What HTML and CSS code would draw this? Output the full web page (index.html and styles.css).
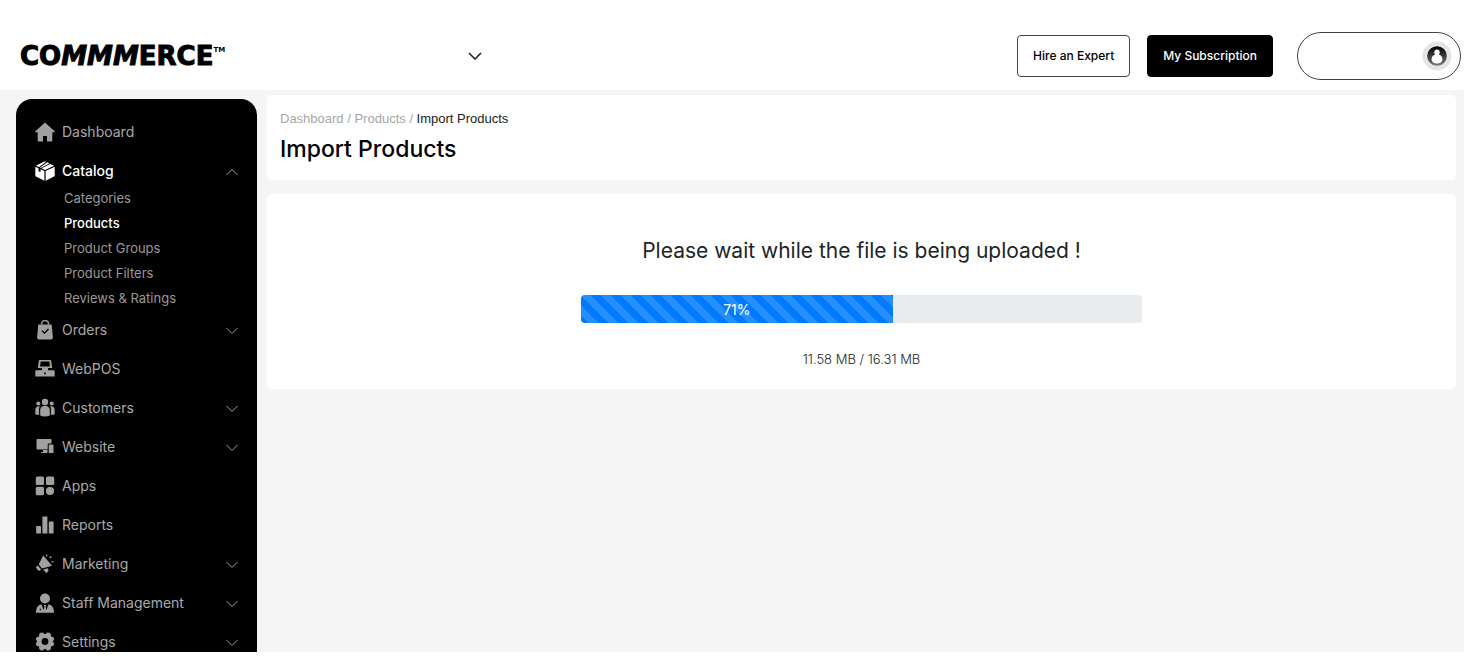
FILE: index.html
```html
<!DOCTYPE html>
<html lang="en">
<head>
<meta charset="utf-8">
<title>Import Products</title>
<link rel="stylesheet" href="styles.css">
</head>
<body>
<svg class="sprite" aria-hidden="true">
  <symbol id="chevron" viewBox="0 0 14 8"><path d="M1.500 1L7 6.500 12.500 1" fill="none" stroke="currentColor"/></symbol>
</svg>
<header class="topbar">
  <a class="logo" href="#">CO<i>MMM</i>ERCE<sup class="tm">TM</sup></a>
  <button class="store-switch" aria-label="Switch store"><svg width="14" height="8" viewBox="0 0 14 8"><path d="M1 1l6 6 6-6" fill="none" stroke="currentColor" stroke-width="1.600"/></svg></button>
  <div class="actions">
    <a class="btn" href="#">Hire an Expert</a>
    <a class="btn btn-dark" href="#">My Subscription</a>
    <button class="account" aria-label="Account">
      <svg width="30" height="30" viewBox="0 0 30 30"><defs><linearGradient id="disc" x2="0" y2="1"><stop offset="0" stop-color="#000"/><stop offset="1" stop-color="#777"/></linearGradient></defs><circle cx="15" cy="15" r="14.500" fill="#e4e4e4"/><circle cx="15" cy="15" r="9.800" fill="url(#disc)"/><path d="M15 8.400c1.700 0 2.800 1.200 2.800 2.800 0 1-.3 1.800-.9 2.400 2.200.7 3.500 2.300 3.500 4.900 0 2.400-2.400 4-5.400 4s-5.400-1.600-5.400-4c0-2.600 1.300-4.200 3.500-4.900-.6-.6-.9-1.400-.9-2.400 0-1.600 1.100-2.800 2.800-2.800z" fill="#fff"/></svg>
    </button>
  </div>
</header>
<div class="shell">
  <nav class="sidebar" aria-label="Main">
    <a class="item" href="#"><svg class="icon" viewBox="0 0 20 20"><path d="M10 .5L.4 9.300c-.4.400-.2 1 .4 1H2.700V18.500c0 .6.400 1 1 1H8v-5.500h4v5.500h4.300c.6 0 1-.4 1-1v-8.200h1.900c.6 0 .8-.6.400-1z"/></svg>Dashboard</a>
    <a class="item active" href="#"><svg class="icon" viewBox="0 0 20 20"><path d="M.3 5.700l3.200 1.500v3l2 .9V8.200l3.900 1.900V19.700L1 15.500c-.5-.3-.7-.6-.7-1.100z"/><path d="M10.600 10.100l9.100-4.400v8.700c0 .5-.2.800-.7 1.100l-8.400 4.200z"/><path d="M10 9L6.500 7.300 15.200 3.100l4 1.700zM.9 4.700l3.500-1.800L8.900.7c.7-.4 1.500-.4 2.200 0l-6.900 5.300zM5 6.600l7.300-5.400 2.200 1L5.700 6.900z"/></svg>Catalog<svg class="chev up" viewBox="0 0 14 8"><use href="#chevron"/></svg></a>
    <div class="submenu">
      <a href="#">Categories</a>
      <a class="active" href="#">Products</a>
      <a href="#">Product Groups</a>
      <a href="#">Product Filters</a>
      <a href="#">Reviews &amp; Ratings</a>
    </div>
    <a class="item" href="#"><svg class="icon" viewBox="0 0 20 20"><path fill-rule="evenodd" d="M3.300 4.500h13.400l1.200 12.800c.1 1.300-.8 2.200-2 2.200H4.100c-1.200 0-2.100-.9-2-2.200zM6.500 11l3 3.200L14 9.500l-1-.9-3.500 3.600-2-2z"/><path d="M6.500 4.500V3.800a3.500 3.200 0 0 1 7 0v.7" fill="none" stroke="currentColor" stroke-width="1.400"/></svg>Orders<svg class="chev" viewBox="0 0 14 8"><use href="#chevron"/></svg></a>
    <a class="item" href="#"><svg class="icon" viewBox="0 0 20 20"><path fill-rule="evenodd" d="M4.700 1h10.600c.5 0 .8.300.9.800l1 7.200H2.800l1-7.200c.1-.5.400-.8.900-.8zm1 1.600L5 7.400h10l-.7-4.800z"/><path d="M7 8.500h6V12H7z"/><path fill-rule="evenodd" d="M1.300 11.200h17.400c.6 0 1 .4 1 1v5.300H.3v-5.300c0-.6.400-1 1-1zm7.900 2.300v1.700h1.600v-1.700z"/></svg>WebPOS</a>
    <a class="item" href="#"><svg class="icon" viewBox="0 0 20 20"><circle cx="10" cy="4" r="3.200"/><circle cx="3.300" cy="5.500" r="2"/><circle cx="16.700" cy="5.500" r="2"/><path d="M5.200 17.500V12a4.800 4.200 0 0 1 9.600 0v5.500c-3 1.200-6.600 1.200-9.600 0zM4.200 16.800H1c-.4 0-.7-.3-.7-.7v-4.500c0-2 1.700-3.500 4.500-3.200-.5.800-.8 1.800-.8 3zM15.800 16.800H19c.4 0 .7-.3.700-.7v-4.500c0-2-1.700-3.500-4.500-3.200.5.800.8 1.800.8 3z"/></svg>Customers<svg class="chev" viewBox="0 0 14 8"><use href="#chevron"/></svg></a>
    <a class="item" href="#"><svg class="icon" viewBox="0 0 20 20"><path d="M2.500 2h13c.6 0 1 .4 1 1v3.500h-2.300c-.9 0-1.500.6-1.500 1.500v4.500H2.500c-.6 0-1-.4-1-1V3c0-.6.400-1 1-1zM8 13h4.500v3H6v-1h2z"/><path d="M14.700 7.500h2.800c.6 0 1 .4 1 1V15c0 .6-.4 1-1 1h-2.800c-.6 0-1-.4-1-1V8.500c0-.6.400-1 1-1z"/></svg>Website<svg class="chev" viewBox="0 0 14 8"><use href="#chevron"/></svg></a>
    <a class="item" href="#"><svg class="icon" viewBox="0 0 20 20"><rect x=".8" y=".5" width="8.200" height="8.400" rx="1.500"/><rect x="11" y=".5" width="8.200" height="8.400" rx="1.500"/><rect x=".8" y="10.800" width="8.200" height="8.400" rx="1.500"/><circle cx="15" cy="15" r="4.100"/></svg>Apps</a>
    <a class="item" href="#"><svg class="icon" viewBox="0 0 20 20"><rect x="1.200" y="11" width="4.800" height="7.500" rx=".5"/><rect x="7.400" y="1.500" width="5" height="17" rx=".5"/><rect x="13.800" y="6.500" width="4.800" height="12" rx=".5"/></svg>Reports</a>
    <a class="item" href="#"><svg class="icon" viewBox="0 0 20 20"><path d="M8.200 1.500L17 11.700 7 14.500 3.700 10.500zM2.800 11.400l3.300 4-1.200 1.100c-.6.500-1.200.5-1.700-.1L1 13.700l.1-.8zM8 15.600l4.800-1.300.6 1.800c.2.900-.2 1.600-1 2l-1 1.200-1.500-1.800z"/><path d="M10.800.8l1.300-.4.500 1.600-1.300.4zM14.300 3.600L15.900 2l1 1-1.700 1.500zM16.600 7.200l1.900-.2.100 1.300-1.900.2z"/></svg>Marketing<svg class="chev" viewBox="0 0 14 8"><use href="#chevron"/></svg></a>
    <a class="item" href="#"><svg class="icon" viewBox="0 0 20 20"><circle cx="10" cy="5.500" r="5"/><path fill-rule="evenodd" d="M1 19.700c0-5 1.700-7.700 5.500-8.500l2.200 6 .7-3.800-.7-1.400h2.600l-.7 1.400.7 3.800 2.200-6c3.800.8 5.500 3.500 5.500 8.500zm3.700-4v1.500H6v-1.500z"/></svg>Staff Management<svg class="chev" viewBox="0 0 14 8"><use href="#chevron"/></svg></a>
    <a class="item" href="#"><svg class="icon" viewBox="0 0 20 20"><path fill-rule="evenodd" d="M5.600.8l2.300-.3L9.300 2h1.400L12.100.5l2.300.3 1.400 1.300.2 2.500 2.400.6.900 2-1.500 2.300 1.500 2.300-.9 2-2.400.6-.2 2.500-1.400 1.300-2.300.3-1.400-1.500H9.300l-1.400 1.500-2.300-.3-1.400-1.300-.2-2.500-2.400-.6-.9-2 1.500-2.300L.7 7.200l.9-2L4 4.600l.2-2.500zM10 6.100a3.400 3.400 0 1 0 0 6.800 3.400 3.400 0 0 0 0-6.800z"/></svg>Settings<svg class="chev" viewBox="0 0 14 8"><use href="#chevron"/></svg></a>
  </nav>
  <main class="content">
    <section class="card page-head">
      <nav class="crumbs" aria-label="Breadcrumb"><a href="#">Dashboard</a> / <a href="#">Products</a> / <span class="current">Import Products</span></nav>
      <h1>Import Products</h1>
    </section>
    <section class="card upload">
      <h2>Please wait while the file is being uploaded !</h2>
      <div class="progress" role="progressbar" aria-label="Upload progress" aria-valuenow="71" aria-valuemin="0" aria-valuemax="100">
        <div class="bar" style="width:55.600%">71%</div>
      </div>
      <p class="size">11.58 MB / 16.31 MB</p>
    </section>
  </main>
</div>
</body>
</html>
```
FILE: styles.css
```css
* { box-sizing: border-box; }
body {
  margin: 0;
  padding: 0 9px 8px 0;
  height: 100vh;
  overflow: hidden;
  display: flex;
  flex-direction: column;
  background: #fff;
  color: #212529;
  font-family: Inter, "Liberation Sans", sans-serif;
  font-size: 14px;
}
a { color: inherit; text-decoration: none; }
button { font: inherit; cursor: pointer; }
.sprite { display: none; }

.topbar {
  flex: none;
  display: flex;
  align-items: center;
  height: 90px;
  padding: 22px 3px 0 20px;
}
.logo {
  width: 448px;
  color: #000;
  font: 700 26px/24px "DejaVu Sans", sans-serif;
  -webkit-text-stroke: 1px #000;
}
.tm { font-size: 7px; line-height: 8px; vertical-align: 13px; -webkit-text-stroke: 0; }
.store-switch { display: flex; padding: 0; border: 0; background: none; color: #222; }
.actions { display: flex; align-items: center; margin-left: auto; }
.btn {
  padding: 0 15px;
  border: 1px solid #444;
  border-radius: 4px;
  line-height: 40px;
  font-size: 12px;
  font-weight: 500;
  color: #000;
  background: #fff;
}
.btn-dark { margin: 0 24px 0 17px; background: #000; border-color: #000; color: #fff; }
.account {
  display: flex;
  align-items: center;
  justify-content: flex-end;
  width: 164px;
  height: 48px;
  padding: 0 8px;
  border: 1px solid #444;
  border-radius: 24px;
  background: #fff;
}

.shell {
  flex: 1;
  min-height: 0;
  display: flex;
  gap: 10px;
  padding: 0 8px 0 16px;
  background: #f5f5f5;
  overflow: hidden;
}
.sidebar {
  flex: none;
  width: 241px;
  margin-top: 9px;
  padding: 13px 18px 13px 19px;
  border-radius: 16px 16px 0 0;
  background: #000;
  color: #a9a9a9;
  overflow: hidden;
}
.item { display: flex; align-items: center; gap: 7px; height: 39px; }
.item.active, .submenu .active { color: #fff; font-weight: 500; }
.icon { width: 20px; height: 20px; fill: #a0a0a0; color: #a0a0a0; }
.active .icon { fill: #fff; }
.chev { width: 14px; height: 8px; margin: 3px 0 0 auto; color: #a0a0a0; }
.up { transform: rotate(180deg); }
.submenu { margin: -4px 0 -1px; padding-left: 29px; font-size: 13px; color: #999; }
.submenu a { display: block; line-height: 25px; }

.content { flex: 1; min-width: 0; padding-top: 5px; }
.card { border-radius: 5px; background: #fff; }
.page-head { padding: 14px 13px; }
.crumbs { font: 13px/20px "Liberation Sans", sans-serif; color: #a6a6a6; }
.current { color: #222; }
h1, h2, p { margin: 0; font-weight: 400; }
h1 { margin-top: 4px; font-size: 23px; line-height: 33px; font-weight: 500; color: #000; }
.upload {
  display: flex;
  flex-direction: column;
  align-items: center;
  margin-top: 14px;
  padding: 40px 33px 18px;
}
h2 { font-size: 21px; line-height: 34px; }
.progress {
  width: 50%;
  height: 28px;
  margin: 27px 0 24px;
  border-radius: 4px;
  background: #e9ecef;
  overflow: hidden;
}
.bar {
  height: 100%;
  line-height: 30px;
  text-align: center;
  color: #fff;
  background: #007bff linear-gradient(45deg, rgba(255,255,255,.15) 25%, transparent 25%, transparent 50%, rgba(255,255,255,.15) 50%, rgba(255,255,255,.15) 75%, transparent 75%) 0 0 / 20px 20px;
}
.size { font-size: 13px; line-height: 24px; font-weight: 300; }
```
